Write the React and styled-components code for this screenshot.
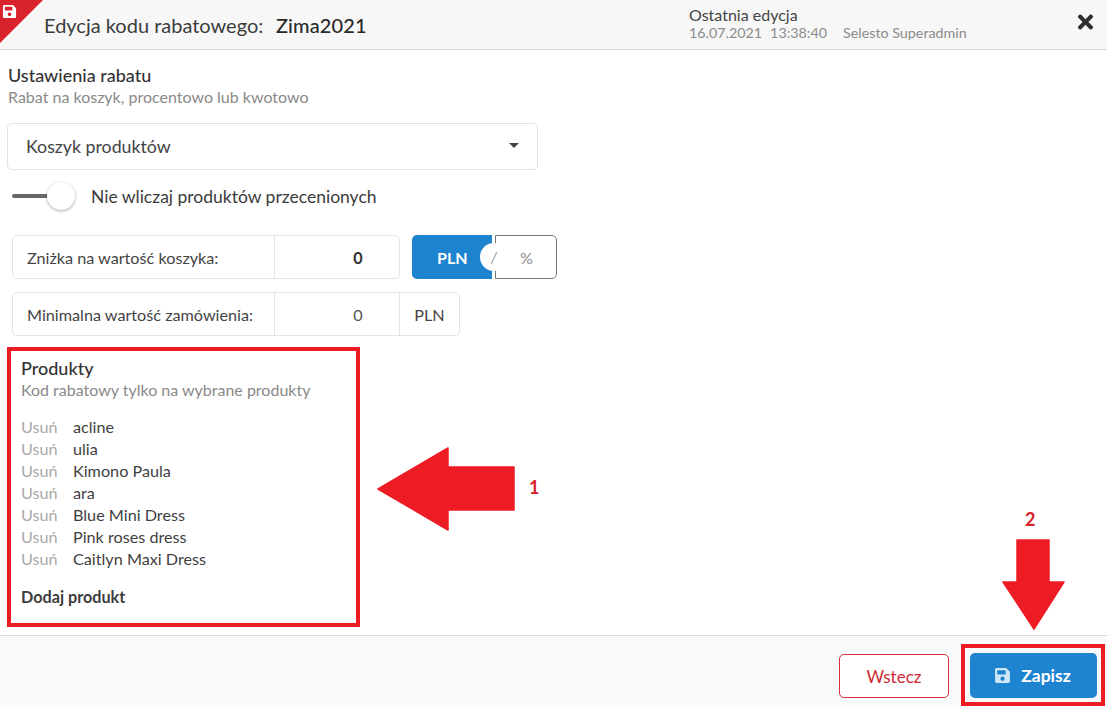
import React from 'react';
import styled, { createGlobalStyle } from 'styled-components';
import { FaSave, FaTimes } from 'react-icons/fa';

const Global = createGlobalStyle`
  html, body { margin: 0; padding: 0; background: #fff; }
  body { font-family: Lato, "Open Sans", "Liberation Sans", sans-serif; color: #333; overflow: hidden; }
  * { box-sizing: border-box; }
`;

const RED = '#ed1c24';
const BLUE = '#1f84d0';

const Page = styled.div`
  position: relative;
  width: 1107px;
  height: 707px;
  display: flex;
  flex-direction: column;
  overflow: hidden;
`;

const Header = styled.header`
  position: relative;
  height: 50px;
  flex: none;
  background: #f7f7f7;
  border-bottom: 1px solid #d9d9d9;
  display: flex;
  align-items: center;
  padding-left: 44px;
`;

const Corner = styled.div`
  position: absolute;
  left: 0;
  top: 0;
  width: 0;
  height: 0;
  border-style: solid;
  border-width: 43px 43px 0 0;
  border-color: #d9222c transparent transparent transparent;
`;

const CornerIcon = styled(FaSave)`
  position: absolute;
  left: 2px;
  top: 4px;
  width: 15px;
  height: 15px;
  color: #fff;
`;

const Title = styled.h1`
  margin: 0;
  font-size: 20px;
  font-weight: 400;
  line-height: 46px;
  color: #3c3c3c;
  width: 232px;
  white-space: nowrap;
`;

const CodeName = styled.span`
  font-size: 20px;
  font-weight: 500;
  color: #2a2a2a;
  letter-spacing: 0.1px;
  line-height: 46px;
`;

const EditInfo = styled.div`
  margin-left: auto;
  width: 387px;
  margin-top: -3px;
`;

const EditTitle = styled.div`
  font-size: 16px;
  line-height: 19px;
  color: #444;
`;

const EditMeta = styled.div`
  font-size: 14.3px;
  line-height: 18px;
  color: #8c8c8c;
  display: flex;
  gap: 8px;
  white-space: nowrap;
  & > span:last-child { margin-left: 8px; }
`;

const CloseIcon = styled(FaTimes)`
  width: 19px;
  height: 22px;
  color: #2f2f2f;
  margin-right: 12px;
  margin-top: -5px;
`;

const Content = styled.main`
  flex: 1;
  padding: 14px 0 0 7px;
  display: flex;
  flex-direction: column;
  align-items: flex-start;
`;

const SectionTitle = styled.h2`
  margin: 0;
  font-size: 18px;
  line-height: 22px;
  font-weight: 500;
  color: #333;
  padding-left: ${p => (p.$flush ? 0 : 1)}px;
`;

const SectionSub = styled.p`
  margin: 0;
  font-size: 16px;
  line-height: 22px;
  color: #8a8a8a;
  padding-left: ${p => (p.$flush ? 0 : 1)}px;
  white-space: nowrap;
`;

const Select = styled.div`
  width: 531px;
  height: 47px;
  margin-top: 15px;
  border: 1px solid #e2e2e2;
  border-radius: 5px;
  display: flex;
  align-items: center;
  justify-content: space-between;
  padding: 0 18px 2px;
  font-size: 17.75px;
  color: #444;
`;

const Caret = styled.span`
  width: 0;
  height: 0;
  border-left: 5px solid transparent;
  border-right: 5px solid transparent;
  border-top: 5px solid #444;
`;

const ToggleRow = styled.div`
  display: flex;
  align-items: center;
  height: 32px;
  margin-top: 10px;
  padding-left: 5px;
`;

const Toggle = styled.div`
  position: relative;
  width: 62px;
  height: 28px;
  display: flex;
  align-items: center;
`;

const Track = styled.div`
  width: 38px;
  height: 4px;
  border-radius: 2px;
  background: #666;
`;

const Knob = styled.div`
  position: absolute;
  left: 35px;
  top: 0;
  width: 28px;
  height: 28px;
  border-radius: 50%;
  background: #fff;
  box-shadow: 0 1px 3px rgba(0,0,0,.35);
`;

const ToggleLabel = styled.span`
  margin-left: 17px;
  font-size: 17.5px;
  color: #3c3c3c;
`;

const FieldRow = styled.div`
  display: flex;
  margin-left: 5px;
  margin-top: ${p => p.$top}px;
`;

const Field = styled.div`
  display: flex;
  height: 44px;
  border: 1px solid #e4e4e4;
  border-radius: 5px;
  font-size: 16.2px;
  color: #444;
`;

const FieldLabel = styled.div`
  width: 262px;
  display: flex;
  align-items: center;
  padding-left: 14px;
  border-right: 1px solid #e4e4e4;
  white-space: nowrap;
`;

const FieldValue = styled.div`
  width: 124px;
  display: flex;
  align-items: center;
  justify-content: center;
  padding-left: 42px;
  font-weight: ${p => (p.$bold ? 700 : 400)};
  color: ${p => (p.$bold ? '#333' : '#555')};
`;

const FieldUnit = styled.div`
  width: 60px;
  display: flex;
  align-items: center;
  justify-content: center;
  border-left: 1px solid #e4e4e4;
`;

const UnitSwitch = styled.div`
  position: relative;
  display: flex;
  margin-left: 12px;
  height: 44px;
`;

const UnitActive = styled.div`
  width: 80px;
  background: ${BLUE};
  border-radius: 5px 0 0 5px;
  color: #fff;
  font-weight: 700;
  font-size: 16px;
  display: flex;
  align-items: center;
  padding-left: 25px;
`;

const UnitDivider = styled.div`
  position: absolute;
  left: 68px;
  top: 8px;
  width: 28px;
  height: 28px;
  border-radius: 50%;
  background: #fff;
  color: #999;
  font-size: 15px;
  font-style: italic;
  display: flex;
  align-items: center;
  justify-content: center;
`;

const UnitOther = styled.div`
  width: 62px;
  margin-left: 3px;
  border: 1px solid #777;
  border-radius: 0 5px 5px 0;
  display: flex;
  align-items: center;
  justify-content: center;
  color: #8a8a8a;
  font-size: 16px;
  padding-left: 1px;
`;

const ProductsFrame = styled.section`
  width: 353px;
  height: 280px;
  margin-top: 11px;
  border: 4px solid ${RED};
  padding: 6px 0 0 10px;
`;

const ProductList = styled.ul`
  list-style: none;
  margin: 14px 0 0;
  padding: 0;
`;

const ProductRow = styled.li`
  display: flex;
  height: 22px;
  align-items: center;
  font-size: 16.2px;
  color: #3f3f3f;
`;

const Remove = styled.span`
  width: 52px;
  color: #a9a9a9;
`;

const AddProduct = styled.div`
  margin-top: 18px;
  font-size: 16.2px;
  line-height: 20px;
  font-weight: 700;
  color: #3c3c3c;
`;

const Footer = styled.footer`
  height: 72px;
  flex: none;
  background: #f8f9fb;
  border-top: 1px solid #d9d9d9;
  display: flex;
  align-items: flex-start;
  justify-content: flex-end;
  padding: 8px 2px 0 0;
`;

const BackButton = styled.button`
  width: 110px;
  height: 44px;
  margin-top: 10px;
  border: 1px solid #d8303a;
  border-radius: 5px;
  background: #fff;
  color: #cf2a35;
  font: 400 17px Lato, sans-serif;
`;

const SaveFrame = styled.div`
  margin-left: 12px;
  width: 144px;
  height: 62px;
  border: 4px solid ${RED};
  padding: 5px 4px 5px 5px;
`;

const SaveButton = styled.button`
  width: 127px;
  height: 45px;
  border: 0;
  border-radius: 5px;
  background: ${BLUE};
  color: #fff;
  font: 700 17.5px Lato, sans-serif;
  display: flex;
  align-items: center;
  justify-content: center;
  gap: 10px;
  padding: 0 2px 0 0;
  svg { width: 17px; height: 17px; color: #cfe6f7; }
`;

const Arrow = styled.svg`
  position: absolute;
  left: 0;
  top: 0;
  pointer-events: none;
`;

const Marker = styled.span`
  position: absolute;
  left: ${p => p.$x}px;
  top: ${p => p.$y}px;
  color: #d9222c;
  font-size: 18px;
  line-height: 20px;
  font-weight: 700;
`;

const products = ['acline', 'ulia', 'Kimono Paula', 'ara', 'Blue Mini Dress', 'Pink roses dress', 'Caitlyn Maxi Dress'];

export default function App() {
  return (
    <Page>
      <Global />
      <Header>
        <Corner />
        <CornerIcon />
        <Title>Edycja kodu rabatowego:</Title>
        <CodeName>Zima2021</CodeName>
        <EditInfo>
          <EditTitle>Ostatnia edycja</EditTitle>
          <EditMeta>
            <span>16.07.2021</span>
            <span>13:38:40</span>
            <span>Selesto Superadmin</span>
          </EditMeta>
        </EditInfo>
        <CloseIcon />
      </Header>
      <Content>
        <SectionTitle>Ustawienia rabatu</SectionTitle>
        <SectionSub>Rabat na koszyk, procentowo lub kwotowo</SectionSub>
        <Select>
          Koszyk produktów
          <Caret />
        </Select>
        <ToggleRow>
          <Toggle>
            <Track />
            <Knob />
          </Toggle>
          <ToggleLabel>Nie wliczaj produktów przecenionych</ToggleLabel>
        </ToggleRow>
        <FieldRow $top={23}>
          <Field>
            <FieldLabel>Zniżka na wartość koszyka:</FieldLabel>
            <FieldValue $bold>0</FieldValue>
          </Field>
          <UnitSwitch>
            <UnitActive>PLN</UnitActive>
            <UnitOther>%</UnitOther>
            <UnitDivider>/</UnitDivider>
          </UnitSwitch>
        </FieldRow>
        <FieldRow $top={13}>
          <Field>
            <FieldLabel>Minimalna wartość zamówienia:</FieldLabel>
            <FieldValue>0</FieldValue>
            <FieldUnit>PLN</FieldUnit>
          </Field>
        </FieldRow>
        <ProductsFrame>
          <SectionTitle $flush>Produkty</SectionTitle>
          <SectionSub $flush>Kod rabatowy tylko na wybrane produkty</SectionSub>
          <ProductList>
            {products.map(name => (
              <ProductRow key={name}>
                <Remove>Usuń</Remove>
                {name}
              </ProductRow>
            ))}
          </ProductList>
          <AddProduct>Dodaj produkt</AddProduct>
        </ProductsFrame>
      </Content>
      <Footer>
        <BackButton>Wstecz</BackButton>
        <SaveFrame>
          <SaveButton>
            <FaSave />
            Zapisz
          </SaveButton>
        </SaveFrame>
      </Footer>
      <Arrow width="1107" height="707" viewBox="0 0 1107 707">
        <path d="M378 489 L448 448 L448 467 L514 467 L514 510 L448 510 L448 530 Z" fill={RED} stroke={RED} strokeWidth="1.5" strokeLinejoin="round" />
        <path d="M1017 540 L1049 540 L1049 582 L1064 582 L1034 629 L1003 582 L1017 582 Z" fill={RED} stroke={RED} strokeWidth="1.5" strokeLinejoin="round" />
      </Arrow>
      <Marker $x={529} $y={477}>1</Marker>
      <Marker $x={1025} $y={509}>2</Marker>
    </Page>
  );
}
